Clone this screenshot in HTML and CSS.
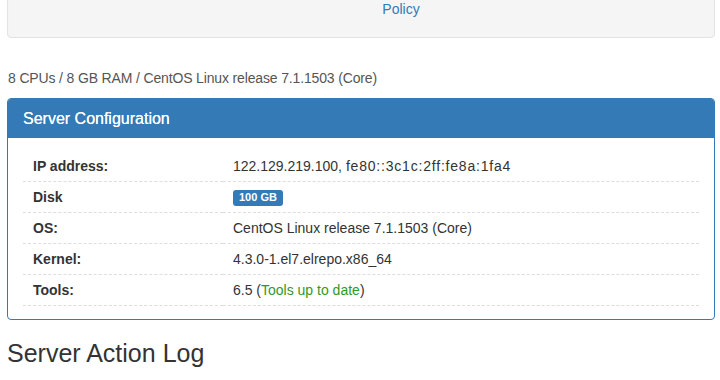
FILE: index.html
```html
<!DOCTYPE html>
<html>
<head>
<meta charset="utf-8">
<link rel="stylesheet" href="styles.css">
</head>
<body>
<div class="page">
  <div class="well">
    <a class="policy" href="#">Policy</a>
  </div>
  <p class="summary">8 CPUs / 8 GB RAM / CentOS Linux release 7.1.1503 (Core)</p>
  <div class="panel">
    <div class="panel-heading">Server Configuration</div>
    <div class="panel-body">
      <table class="info">
        <tr><th>IP address:</th><td>122.129.219.100, <span class="ipv6">fe80::3c1c:2ff:fe8a:1fa4</span></td></tr>
        <tr><th>Disk</th><td><span class="badge">100 GB</span></td></tr>
        <tr><th>OS:</th><td>CentOS Linux release 7.1.1503 (Core)</td></tr>
        <tr><th>Kernel:</th><td>4.3.0-1.el7.elrepo.x86_64</td></tr>
        <tr><th>Tools:</th><td>6.5 (<span class="ok">Tools up to date</span>)</td></tr>
      </table>
    </div>
  </div>
  <h2 class="log-title">Server Action Log</h2>
</div>
</body>
</html>
```
FILE: styles.css
```css
html, body {
  margin: 0;
  padding: 0;
  background: #fff;
}
body {
  font-family: "Liberation Sans", Arial, sans-serif;
  font-size: 14px;
  line-height: 20px;
  color: #333;
}
.page {
  padding: 0 5px 0 7px;
}
.well {
  margin-top: -20px;
  padding: 18px 19px 18px 99px;
  background: #f5f5f5;
  border: 1px solid #e3e3e3;
  border-radius: 4px;
  box-shadow: inset 0 1px 1px rgba(0,0,0,0.05);
  text-align: center;
}
.policy {
  color: #337ab7;
  text-decoration: none;
}
.summary {
  margin: 30px 0 10px 1px;
  color: #555;
  letter-spacing: -0.15px;
}
.panel {
  border: 1px solid #337ab7;
  border-radius: 4px;
  overflow: hidden;
}
.panel-heading {
  background: #337ab7;
  color: #fff;
  padding: 10px 15px;
  font-size: 16px;
  line-height: 19px;
  text-shadow: 0 0 0.4px #fff;
}
.panel-body {
  padding: 13px 15px;
}
.info {
  width: 100%;
  border-collapse: collapse;
}
.info th, .info td {
  padding: 5px 10px;
  line-height: 20px;
  border-bottom: 1px dashed #ddd;
  text-align: left;
  vertical-align: top;
}
.info th {
  width: 180px;
  font-weight: bold;
}
.ipv6 {
  letter-spacing: 0.8px;
}
.badge {
  display: inline-block;
  background: #337ab7;
  color: #fff;
  font-size: 11px;
  font-weight: bold;
  line-height: 11px;
  padding: 2px 6px 3px;
  border-radius: 3px;
  vertical-align: 1px;
}
.ok {
  color: #2f9a1f;
}
.log-title {
  margin: 20px 0 10px;
  font-size: 25px;
  font-weight: normal;
  line-height: 26px;
  color: #333;
}
```
